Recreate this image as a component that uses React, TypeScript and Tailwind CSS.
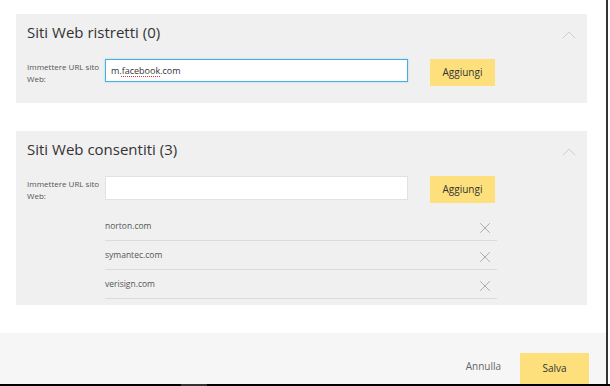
import { X, ChevronUp } from "lucide-react"

const font = { fontFamily: '"Open Sans", "Noto Sans", sans-serif' }

function UrlRow({ value, focused }: { value: string; focused?: boolean }) {
  return (
    <div className="flex items-start">
      <div className="w-[78px] pt-[2px] text-[8px] leading-[12px] text-[#555]">
        Immettere URL sito
        <br />
        Web:
      </div>
      <div
        className={
          focused
            ? "w-[303px] h-[23px] bg-white border border-[#45b0dc] shadow-[0_0_2px_#9ed6ee] flex items-center px-[5px]"
            : "w-[303px] h-[24px] bg-white border border-[#e2e2e2] flex items-center px-[5px]"
        }
      >
        <span className="text-[9px] text-[#333]">
          {value && (
            <>
              m.
              <span className="underline decoration-dotted decoration-[#d33] decoration-[1px] underline-offset-2">
                facebook
              </span>
              .com
            </>
          )}
        </span>
      </div>
      <button className="ml-[22px] w-[65px] h-[27px] bg-[#fde07c] text-[10px] text-[#333]">Aggiungi</button>
    </div>
  )
}

function Panel({ title, children }: { title: string; children: React.ReactNode }) {
  return (
    <div className="w-[571px] bg-[#f0f0f0] pl-[11px]">
      <div className="flex items-start justify-between h-[45px] pr-[6px]">
        <h2 className="text-[15px] font-normal text-[#333] pt-[7px]">{title}</h2>
        <ChevronUp className="w-[24px] h-[24px] text-[#cacaca] mt-[9px]" strokeWidth={0.9} />
      </div>
      {children}
    </div>
  )
}

const allowed = ["norton.com", "symantec.com", "verisign.com"]

export default function App() {
  return (
    <div className="w-[610px] h-[386px] bg-white flex flex-col overflow-hidden" style={font}>
      <div className="flex-1 flex">
        <div className="w-[608px] border-r-2 border-[#333] flex flex-col">
          <div className="flex-1 pl-[16px] pt-[14px] flex flex-col gap-[28px]">
            <Panel title="Siti Web ristretti (0)">
              <div className="pb-[17px]">
                <UrlRow value="m.facebook.com" focused />
              </div>
            </Panel>
            <Panel title="Siti Web consentiti (3)">
              <UrlRow value="" />
              <ul className="ml-[78px] w-[392px] mt-[9px] pb-[6px]">
                {allowed.map((site) => (
                  <li
                    key={site}
                    className="h-[29px] border-b border-[#dcdcdc] flex items-center justify-between pr-[3px]"
                  >
                    <span className="text-[8.5px] text-[#555]">{site}</span>
                    <X className="w-[18px] h-[18px] text-[#8a8a8a] mt-[3px]" strokeWidth={0.9} />
                  </li>
                ))}
              </ul>
            </Panel>
          </div>
          <div className="h-[51px] bg-[#f6f6f6] flex items-end justify-end pr-[17px]">
            <button className="mb-[10px] mr-[19px] text-[10px] text-[#666]">Annulla</button>
            <button className="w-[69px] h-[31px] bg-[#fde07c] text-[10px] text-[#333]">Salva</button>
          </div>
        </div>
      </div>
      <div className="h-[2px] bg-black flex">
        <div className="ml-[181px] w-[26px] bg-[#333]" />
      </div>
    </div>
  )
}
